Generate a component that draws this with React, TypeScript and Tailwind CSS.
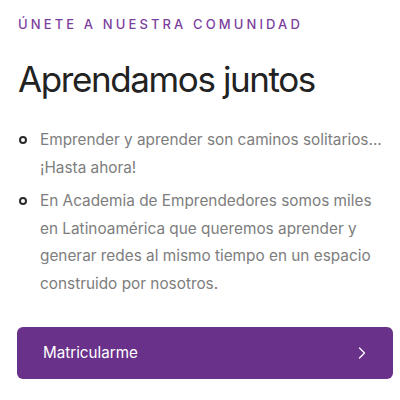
import React from 'react';
import { ChevronRight } from 'lucide-react';

const POINTS = [
  'Emprender y aprender son caminos solitarios... ¡Hasta ahora!',
  'En Academia de Emprendedores somos miles en Latinoamérica que queremos aprender y generar redes al mismo tiempo en un espacio construido por nosotros.',
];

export default function App() {
  return (
    <div className="w-[400px] h-[400px] bg-white pl-[17px] pr-[7px] pt-[16px] font-['Inter',sans-serif]">
      {/* eyebrow */}
      <p className="pl-px text-[13px] font-medium tracking-[0.24em] leading-[16px] text-[#7d3f9e]">
        ÚNETE A NUESTRA COMUNIDAD
      </p>

      <h1 className="mt-[25px] pl-px text-[35px] leading-[44px] tracking-[-0.04em] text-[#222222]">
        Aprendamos juntos
      </h1>

      <ul className="mt-[25px] flex flex-col gap-[6px]">
        {POINTS.map((p) => (
          <li key={p} className="flex items-start pr-[4px]">
            <span className="mt-[10px] ml-[2px] mr-[13px] h-[8px] w-[8px] shrink-0 rounded-full border-2 border-[#2a2a2a]" />
            <span className="text-[15.35px] leading-[27.5px] text-[#7d7d7d]">{p}</span>
          </li>
        ))}
      </ul>

      <button className="mt-[30px] flex h-[52px] w-full items-center justify-between rounded-[6px] bg-[#6a318a] pl-[26px] pr-[21px] text-white">
        <span className="text-[15.2px]">Matricularme</span>
        <ChevronRight className="h-[20px] w-[20px]" strokeWidth={1.5} />
      </button>
    </div>
  );
}
